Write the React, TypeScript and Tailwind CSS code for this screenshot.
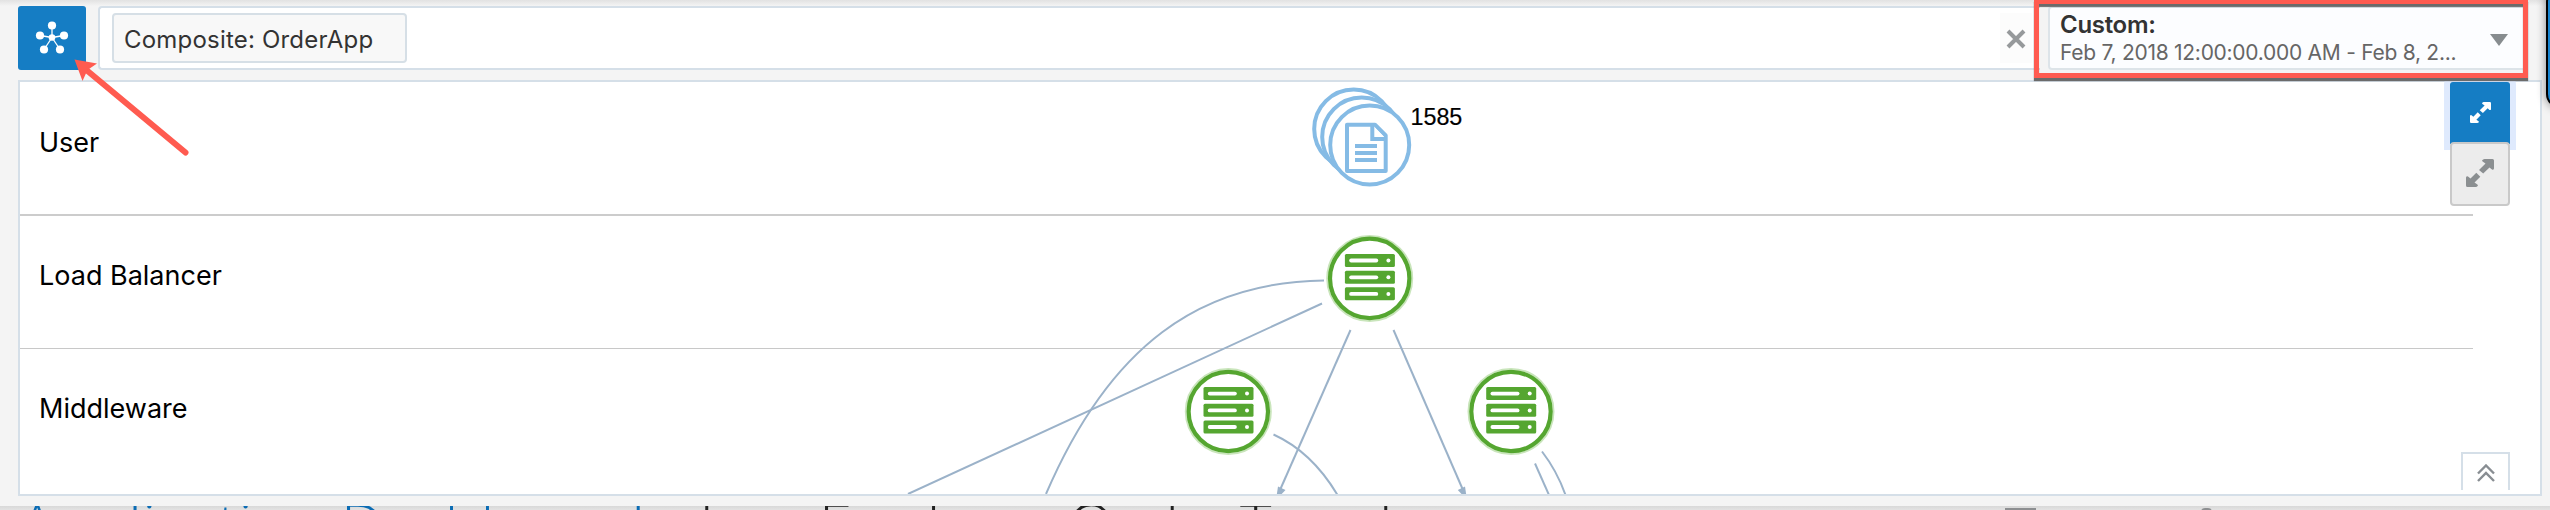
import React from "react";

const FONT = "font-[Inter,Roboto,sans-serif]";

function HubIcon() {
  const nodes = [
    [17, 4.5],
    [29, 14.5],
    [25, 28.5],
    [9, 28.5],
    [5, 14.5],
  ];
  return (
    <svg width="34" height="34" viewBox="0 0 34 34">
      {nodes.map(([x, y]) => (
        <g key={`${x}-${y}`}>
          <line x1="17" y1="16.5" x2={x} y2={y} stroke="#fff" strokeWidth="1.3" />
          <circle cx={x} cy={y} r="4.1" fill="#fff" />
        </g>
      ))}
      <circle cx="17" cy="16.5" r="3.3" fill="#fff" />
    </svg>
  );
}

function ExpandIcon({ size, color }: { size: number; color: string }) {
  return (
    <svg width={size} height={size} viewBox="0 0 28 28" className="-mt-0.5">
      <path d="M16 1.5Q17 0 18.5 0H26.5Q28 0 28 1.5V9.5Q27.5 11.3 26 10.5L23.5 8.4L17.2 14.5L13 11L19.5 4.5L16.6 2.5ZM12 26.5Q11 28 9.5 28H1.5Q0 28 0 26.5V18.5Q.5 16.7 2 17.5L4.5 19.6L10.3 13.8L14.3 17.7L8.5 23.5L11.4 25.5Z" fill={color} />
    </svg>
  );
}

function ServerNode({ x, y }: { x: number; y: number }) {
  return (
    <g transform={`translate(${x} ${y})`}>
      <circle r="42.6" fill="#fff" stroke="#c9e5bb" strokeWidth="1.8" />
      <circle r="39.7" fill="#fff" stroke="#55a630" strokeWidth="4.2" />
      {[-24.5, -7.7, 8.9].map((top) => (
        <g key={top}>
          <rect x="-24.8" y={top} width="50" height="13" rx="1.5" fill="#55a630" />
          <rect x="-20.5" y={top + 4.7} width="29" height="3.8" rx="1.9" fill="#fff" />
          <circle cx="18.7" cy={top + 6.6} r="2" fill="#fff" />
        </g>
      ))}
    </g>
  );
}

function Topology() {
  return (
    <svg className="absolute left-0 top-0" width="2520" height="412" viewBox="20 82 2520 412">
      <g fill="none" stroke="#9bb2c9" strokeWidth="2">
        <path d="M1324 280.5C1200 282 1110 345 1046 494" />
        <path d="M1322 303.5L908 494" />
        <path d="M1350.5 330L1280 490" />
        <path d="M1393.5 330L1463 490" />
        <path d="M1273.5 434.5Q1312 452 1337.5 495" />
        <path d="M1535 463.5L1549 495" />
        <path d="M1542 451.5Q1557 471 1565.5 495" />
      </g>
      <path d="M1278 486.5L1285.5 490L1276 500Z" fill="#9bb2c9" />
      <path d="M1465 486.5L1457.8 490L1467 500Z" fill="#9bb2c9" />
      <g fill="#fff" stroke="#85bbe5" strokeWidth="4">
        <circle cx="1353.7" cy="129" r="39.5" />
        <circle cx="1361.7" cy="137" r="39.5" />
        <circle cx="1369.7" cy="145" r="39.5" />
        <path d="M1347 124.7H1375L1385.7 135.5V171H1347Z" strokeLinejoin="round" />
        <path d="M1372.3 125V139H1386" />
        <path d="M1355 146H1377M1355 153H1377M1355 160H1377" />
      </g>
      <ServerNode x={1369.7} y={278.4} />
      <ServerNode x={1228.3} y={411.5} />
      <ServerNode x={1511} y={411.5} />
      <text x="1410.5" y="125" fontSize="23.3" fill="#000" stroke="#000" strokeWidth="0.2" className="font-['Liberation_Sans',sans-serif]">
        1585
      </text>
    </svg>
  );
}

function Toolbar() {
  return (
    <div className="mt-1.5 flex h-16 pl-[18px]">
      <button className="flex w-[68px] items-center justify-center rounded-[3px] bg-[#157dc4]">
        <HubIcon />
      </button>
      <div className="ml-3 flex w-[1942px] items-center justify-between rounded-l border-y-2 border-l-2 border-[#d5dfe8] bg-white pl-3">
        <div className="mb-[1px] flex h-[50px] w-[295px] items-center rounded border-2 border-[#d6dfe6] bg-[#f8f8f8] pl-[10px] pt-[4px]">
          <span className="whitespace-nowrap text-[24px] tracking-[0.2px] text-[#333]">Composite: OrderApp</span>
        </div>
        <div className="mr-2 flex h-[50px] w-8 items-center justify-center bg-[#fcfcfc]">
          <svg width="20" height="20" viewBox="0 0 20 20" className="mt-0.5">
            <path d="M2 2L18 18M18 2L2 18" stroke="#96999b" strokeWidth="4" />
          </svg>
        </div>
      </div>
      <div className="ml-2 flex w-[478px] items-center justify-between rounded-l border-2 border-[#dde4e9] bg-[#fcfdff] pl-[10px] pr-4">
        <div className="flex flex-col whitespace-nowrap">
          <span className="text-[24px] font-semibold leading-[30px] tracking-[-0.3px] text-[#333]">Custom:</span>
          <span className="text-[21px] leading-[26px] tracking-[-0.27px] text-[#666]">Feb 7, 2018 12:00:00.000 AM - Feb 8, 2...</span>
        </div>
        <svg width="18" height="12" viewBox="0 0 18 12" className="mt-1">
          <path d="M0 0H18L9 12Z" fill="#878c8f" />
        </svg>
      </div>
    </div>
  );
}

export default function App() {
  return (
    <div className={`relative flex h-[510px] w-[2550px] flex-col overflow-hidden bg-[#f4f4f4] text-black ${FONT}`}>
      <div className="absolute inset-x-0 top-0 h-1.5 bg-gradient-to-b from-[#e2e2e2] to-[#f4f4f4]" />
      <div className="relative">
        <Toolbar />
      </div>

      <div className="relative ml-[18px] mt-2.5 h-[416px] w-[2524px] shrink-0 border-2 border-[#d5dfe8] bg-white text-[27px] leading-[32px]">
        <div className="h-[134px] w-[2453px] border-b-2 border-[#ccc] pl-[19px] pt-[45px]">
          <span>User</span>
        </div>
        <div className="h-[133px] w-[2453px] border-b border-[#c8c8c8] pl-[19px] pt-[44px]">
          <span>Load Balancer</span>
        </div>
        <div className="pl-[19px] pt-[44px]">
          <span>Middleware</span>
        </div>
        <Topology />
        <div className="absolute right-[30px] top-0 flex w-[60px] flex-col">
          <button className="flex h-[62px] items-center justify-center rounded-t-[3px] bg-[#157dc4] shadow-[0_0_0_6px_#dfeafd] [clip-path:inset(-2px_-6px_-6px_-6px)]">
            <ExpandIcon size={21} color="#fff" />
          </button>
          <button className="relative -mt-0.5 flex h-16 items-center justify-center rounded border-2 border-[#c9c9c9] bg-[#ececec]">
            <ExpandIcon size={28} color="#8b8f91" />
          </button>
        </div>
        <div className="absolute right-[30px] top-[370px] flex h-[38px] w-[49px] items-center justify-center border-x-2 border-t-2 border-[#d5dfe8]">
          <svg width="18" height="18" viewBox="0 0 18 18" className="mt-0.5">
            <path d="M1 9.5L9 1.5L17 9.5M1 17L9 9L17 17" fill="none" stroke="#888d92" strokeWidth="2.4" />
          </svg>
        </div>
      </div>

      <div className="mt-2.5 h-1 shrink-0 overflow-hidden bg-gradient-to-b from-[#d8d8d8] to-[#e2e2e2]">
        <div className="relative -mt-[11px] flex whitespace-nowrap pl-[19px] font-['Open_Sans',sans-serif] text-[60px] font-light leading-[60px] tracking-[0.6px] text-[#222]">
          <span className="w-[681px] text-[#0b6cb4]">Application Dashboard</span>
          <span className="w-[119px]">has</span>
          <span className="w-[249px] tracking-[3px]">Explore</span>
          <span className="w-[172px] tracking-[3px]">Order</span>
          <span className="tracking-[6px]">Track</span>
          <span className="absolute left-[2005px] top-[13px] h-1 w-[31px] bg-[#8d8f91]" />
          <span className="absolute left-[2201px] top-[13px] h-1 w-[11px] rounded-t bg-[#8d8f91]" />
        </div>
      </div>

      <div className="absolute -top-3 left-[2546px] h-[120px] w-20 rounded-[14px] border-2 border-black bg-[#1784d0] shadow-[0_0_10px_rgba(0,0,0,0.45)]" />

      <div className="absolute left-[2034px] -top-px h-[79px] w-[494px] border-[5px] border-[#ff5b50] shadow-[0_3px_1px_#6b6b6b,inset_0_3px_1px_#6b6b6b]" />
      <svg className="absolute left-0 top-0" width="200" height="170" viewBox="0 0 200 170">
        <path d="M84 68L185.5 152.5" stroke="#ff5b50" strokeWidth="6" strokeLinecap="round" />
        <path d="M74.5 59.5L97 63.5L87.5 70L82.5 81Z" fill="#ff5b50" />
      </svg>
    </div>
  );
}
